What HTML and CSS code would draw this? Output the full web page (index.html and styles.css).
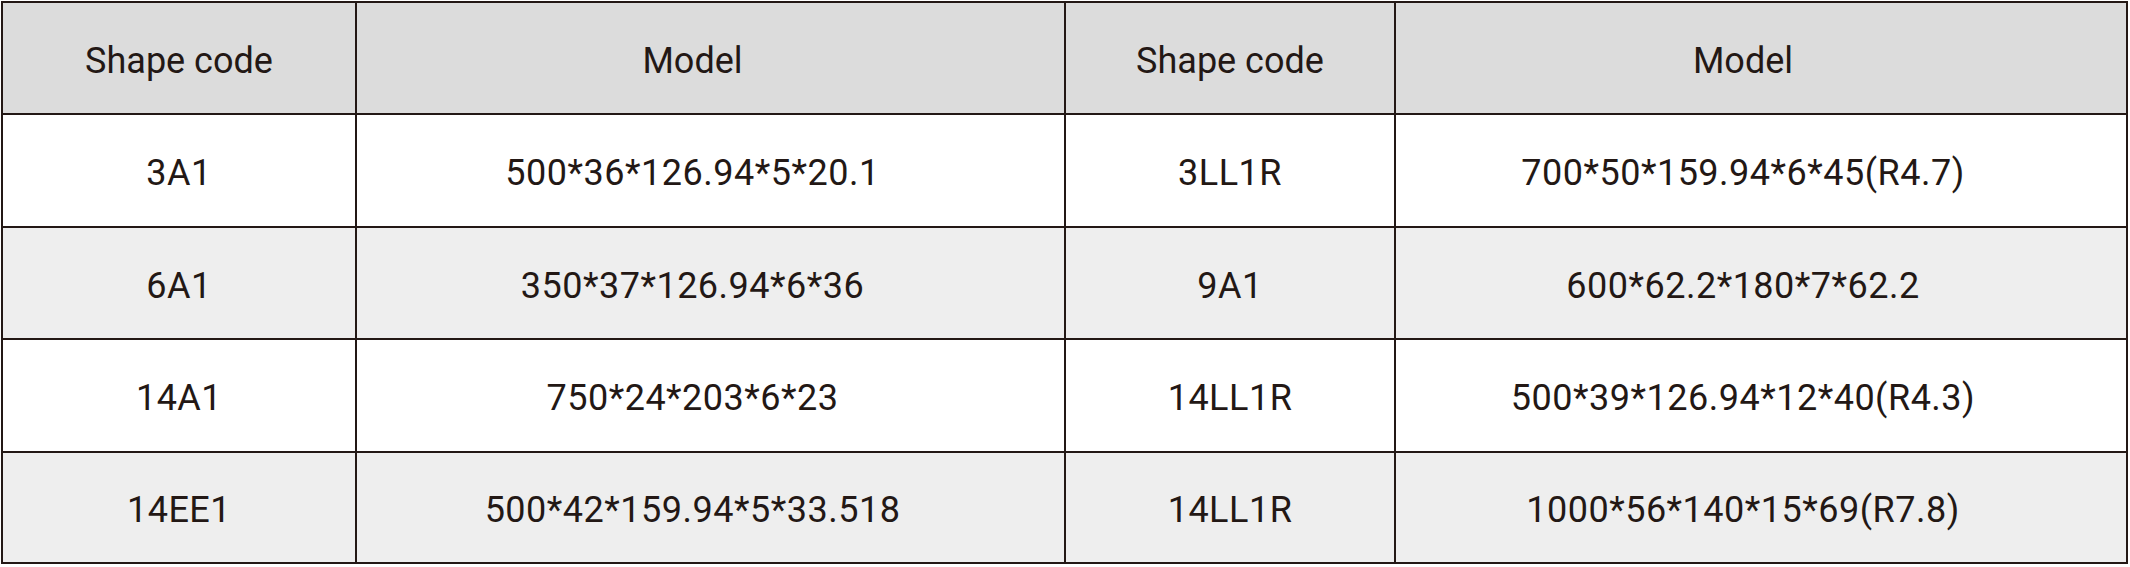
FILE: index.html
```html
<!DOCTYPE html>
<html lang="en">
<head>
<meta charset="utf-8">
<title>Shape code table</title>
<link rel="stylesheet" href="styles.css">
</head>
<body>
<div class="table">
  <div class="cell head">Shape code</div>
  <div class="cell head model">Model</div>
  <div class="cell head">Shape code</div>
  <div class="cell head model">Model</div>

  <div class="cell data">3A1</div>
  <div class="cell data model">500*36*126.94*5*20.1</div>
  <div class="cell data">3LL1R</div>
  <div class="cell data model">700*50*159.94*6*45(R4.7)</div>

  <div class="cell data alt">6A1</div>
  <div class="cell data alt model">350*37*126.94*6*36</div>
  <div class="cell data alt">9A1</div>
  <div class="cell data alt model">600*62.2*180*7*62.2</div>

  <div class="cell data">14A1</div>
  <div class="cell data model">750*24*203*6*23</div>
  <div class="cell data">14LL1R</div>
  <div class="cell data model">500*39*126.94*12*40(R4.3)</div>

  <div class="cell data alt">14EE1</div>
  <div class="cell data alt model">500*42*159.94*5*33.518</div>
  <div class="cell data alt">14LL1R</div>
  <div class="cell data alt model">1000*56*140*15*69(R7.8)</div>
</div>
</body>
</html>
```

FILE: styles.css
```css
html, body {
  margin: 0;
  padding: 0;
  background: #ffffff;
}

.table {
  margin: 1px 0 0 1px;
  display: grid;
  grid-template-columns: 352px 707px 328px 730px;
  grid-template-rows: 110px 111px 110px 111px 109px;
  gap: 2px;
  padding: 2px;
  width: max-content;
  background: #231815;
}

.cell {
  display: flex;
  align-items: center;
  justify-content: center;
  padding-top: 5px;
  box-sizing: border-box;
  background: #ffffff;
  color: #231815;
  font-family: Roboto, "Liberation Sans", Arial, sans-serif;
  font-size: 36px;
  line-height: 1;
}

.model {
  padding-right: 36px;
}

.data {
  letter-spacing: 0.5px;
}

.head {
  background: #dcdcdc;
}

.alt {
  background: #eeeeee;
}
```
